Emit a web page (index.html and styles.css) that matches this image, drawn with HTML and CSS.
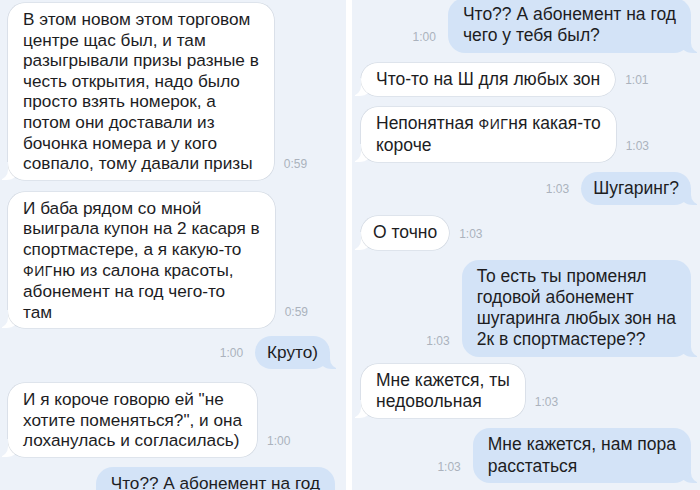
FILE: index.html
```html
<!DOCTYPE html>
<html lang="ru">
<head>
<meta charset="utf-8">
<link rel="stylesheet" href="styles.css">
</head>
<body>
<div class="screen">
  <div class="panel panel-left">
    <div class="row in r1">
      <div class="bubble">В этом новом этом торговом<br>центре щас был, и там<br>разыгрывали призы разные в<br>честь открытия, надо было<br>просто взять номерок, а<br>потом они доставали из<br>бочонка номера и у кого<br>совпало, тому давали призы</div>
      <span class="time">0:59</span>
    </div>
    <div class="row in r2">
      <div class="bubble">И баба рядом со мной<br>выиграла купон на 2 касаря в<br>спортмастере, а я какую-то<br><span class="cens">ФИГ</span>ню из салона красоты,<br>абонемент на год чего-то<br>там</div>
      <span class="time">0:59</span>
    </div>
    <div class="row out r3">
      <span class="time">1:00</span>
      <div class="bubble short">Круто)</div>
    </div>
    <div class="row in r4">
      <div class="bubble">И я короче говорю ей "не<br>хотите поменяться?", и она<br>лоханулась и согласилась)</div>
      <span class="time">1:00</span>
    </div>
    <div class="row out r5">
      <div class="bubble">Что?? А абонемент на год<br>чего у тебя был?</div>
    </div>
  </div>
  <div class="divider"></div>
  <div class="panel panel-right">
    <div class="row out s1">
      <span class="time">1:00</span>
      <div class="bubble">Что?? А абонемент на год<br>чего у тебя был?</div>
    </div>
    <div class="row in s2">
      <div class="bubble">Что-то на Ш для любых зон</div>
      <span class="time">1:01</span>
    </div>
    <div class="row in s3">
      <div class="bubble">Непонятная <span class="cens">ФИГ</span>ня какая-то<br>короче</div>
      <span class="time">1:03</span>
    </div>
    <div class="row out s4">
      <span class="time">1:03</span>
      <div class="bubble short">Шугаринг?</div>
    </div>
    <div class="row in s5">
      <div class="bubble short">О точно</div>
      <span class="time">1:03</span>
    </div>
    <div class="row out s6">
      <span class="time">1:03</span>
      <div class="bubble">То есть ты променял<br>годовой абонемент<br>шугаринга любых зон на<br>2к в спортмастере??</div>
    </div>
    <div class="row in s7">
      <div class="bubble">Мне кажется, ты<br>недовольная</div>
      <span class="time">1:03</span>
    </div>
    <div class="row out s8">
      <span class="time">1:03</span>
      <div class="bubble">Мне кажется, нам пора<br>расстаться</div>
    </div>
  </div>
</div>
</body>
</html>
```

FILE: styles.css
```css
* { box-sizing: border-box; }
html, body {
  margin: 0;
  padding: 0;
  width: 700px;
  height: 490px;
  overflow: hidden;
  background: #ffffff;
}
.screen {
  display: flex;
  width: 700px;
  height: 490px;
  font-family: "Liberation Sans", Arial, sans-serif;
  color: #1d1d1f;
}
.panel {
  height: 490px;
  overflow: hidden;
  background: #edf2f9;
  display: flex;
  flex-direction: column;
}
.panel-left {
  width: 346px;
  padding: 3px 16px 0 8px;
  --fs: 17.2px;
  --lh: 20.6px;
}
.divider {
  width: 6px;
  background: #ffffff;
}
.panel-right {
  width: 348px;
  padding: 0 9px 0 9px;
  --fs: 17.5px;
  --lh: 21.3px;
}
.row {
  display: flex;
  align-items: flex-end;
  gap: 12px;
  flex-shrink: 0;
  isolation: isolate;
}
.row.in { gap: 10px; }
.row.out { justify-content: flex-end; }
.bubble {
  position: relative;
  white-space: nowrap;
  font-size: var(--fs);
  line-height: var(--lh);
  padding: 6px 15px 6px 15px;
  border-radius: 17px;
}
.bubble.short {
  padding-left: 12px;
  padding-right: 12px;
}
.in .bubble {
  background: #ffffff;
  box-shadow: 0 0 0 0.6px rgba(150, 160, 175, 0.35);
}
.out .bubble {
  background: #d3e3f7;
}
.in .bubble::before {
  content: "";
  position: absolute;
  bottom: 0;
  left: -6px;
  width: 18px;
  height: 16px;
  background: #ffffff;
  border-bottom-right-radius: 14px 12px;
  z-index: -1;
}
.in .bubble::after {
  content: "";
  position: absolute;
  bottom: 0;
  left: -12px;
  width: 12px;
  height: 18px;
  background: #edf2f9;
  border-bottom-right-radius: 10px;
}
.out .bubble::before {
  content: "";
  position: absolute;
  bottom: 0;
  right: -6px;
  width: 18px;
  height: 16px;
  background: #d3e3f7;
  border-bottom-left-radius: 14px 12px;
  z-index: -1;
}
.out .bubble::after {
  content: "";
  position: absolute;
  bottom: 0;
  right: -12px;
  width: 12px;
  height: 18px;
  background: #edf2f9;
  border-bottom-left-radius: 10px;
}
.time {
  font-size: 12px;
  line-height: 14px;
  color: #abb2bd;
  padding-bottom: 9px;
}
.cens {
  font-size: 14px;
  letter-spacing: 0.5px;
}
.r2 { margin-top: 12px; }
.r3 { margin-top: 8px; }
.r4 { margin-top: 14px; }
.r5 { margin-top: 10px; margin-right: -5px; }
.s1 { margin-top: -2px; }
.s2 { margin-top: 10px; }
.s3 { margin-top: 11px; }
.s4 { margin-top: 9.5px; }
.s5 { margin-top: 11px; gap: 7px; }
.s6 { margin-top: 10px; }
.s7 { margin-top: 7px; }
.s8 { margin-top: 10px; }
```
